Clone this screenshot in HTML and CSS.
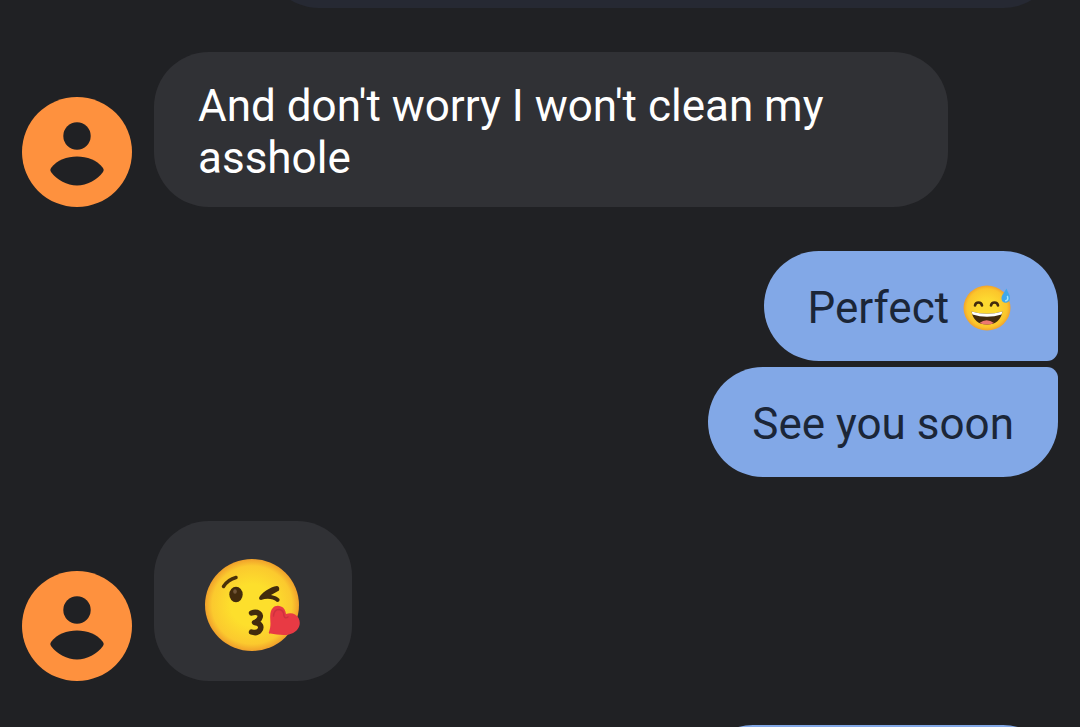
FILE: index.html
```
<!DOCTYPE html>
<html lang="en">
<head>
    <meta charset="UTF-8">
    <meta name="viewport" content="width=device-width, initial-scale=1.0">
    <title>Messages</title>
    <link rel="stylesheet" href="styles.css">
</head>
<body>
    <main class="chat">
        <div class="edge edge-top">
            <div class="bubble media"></div>
        </div>

        <div class="row received">
            <svg class="avatar" viewBox="0 0 110 110" role="img" aria-label="Contact">
                <circle cx="55" cy="55" r="55" fill="#fe913e"/>
                <circle cx="55" cy="39" r="13.7" fill="#202124"/>
                <path d="M29 71C35 63 45 59.5 55 59.5S75 63 81 71Q82.500 73 81 75C75 83 65 88.500 55 88.500S35 83 29 75Q27.500 73 29 71Z" fill="#202124"/>
            </svg>
            <p class="bubble">And don't worry I won't clean my asshole</p>
        </div>

        <div class="group sent">
            <p class="bubble first">Perfect
                <svg class="emoji" viewBox="0 0 48 46" role="img" aria-label="Grinning face with sweat">
                    <defs>
                        <radialGradient id="face">
                            <stop offset="0.4" stop-color="#fdd930"/>
                            <stop offset="0.85" stop-color="#fbc52b"/>
                            <stop offset="1" stop-color="#f2a32d"/>
                        </radialGradient>
                    </defs>
                    <ellipse cx="24" cy="23" rx="23.5" ry="22.5" fill="url(#face)"/>
                    <path d="M12 20.500Q12.500 17.500 15.500 17.500T19 20.500M28 20.500Q28.500 17.500 31.500 17.500T35 20.500" fill="none" stroke="#422b0d" stroke-width="2.6" stroke-linecap="round"/>
                    <path d="M8.500 26.500Q24 31 39.500 26.500Q37 39.500 24 39.500T8.500 26.500Z" fill="#422b0d"/>
                    <path d="M8.500 26.500Q24 31 39.500 26.500L38.500 29.500Q24 34 9.500 29.500Z" fill="#fff"/>
                    <path d="M16.500 38Q23.500 32.500 31 38Q24 41 16.500 38Z" fill="#ed7770"/>
                    <path d="M43.500 3.500C41 8 38.500 10 38.500 13.500C38.500 19.500 47 19 47 13C47 9.500 44.500 7 43.500 3.500Z" fill="#40a8ec"/>
                    <path d="M44.500 11.500Q45.500 15 42.800 15.800" fill="none" stroke="#a5e5fb" stroke-width="1.500" stroke-linecap="round"/>
                </svg>
            </p>
            <p class="bubble last">See you soon</p>
        </div>

        <div class="row received">
            <svg class="avatar" viewBox="0 0 110 110" role="img" aria-label="Contact">
                <circle cx="55" cy="55" r="55" fill="#fe913e"/>
                <circle cx="55" cy="39" r="13.7" fill="#202124"/>
                <path d="M29 71C35 63 45 59.5 55 59.5S75 63 81 71Q82.500 73 81 75C75 83 65 88.500 55 88.500S35 83 29 75Q27.500 73 29 71Z" fill="#202124"/>
            </svg>
            <div class="bubble sticker">
                <svg class="emoji-large" viewBox="0 0 96 92" role="img" aria-label="Face blowing a kiss">
                    <defs>
                        <radialGradient id="kiss">
                            <stop offset="0.45" stop-color="#fddf2c"/>
                            <stop offset="0.85" stop-color="#fbc92e"/>
                            <stop offset="1" stop-color="#f0a02b"/>
                        </radialGradient>
                    </defs>
                    <ellipse cx="47" cy="46" rx="47" ry="46" fill="url(#kiss)"/>
                    <path d="M18.500 27.500Q23 20.500 31 18.500" fill="none" stroke="#4a3009" stroke-width="3.500" stroke-linecap="round"/>
                    <ellipse cx="31" cy="35.500" rx="6.700" ry="7.800" fill="#422b0d"/>
                    <ellipse cx="30" cy="32.500" rx="1.800" ry="2.300" fill="#705538"/>
                    <path d="M72 27C65 28 56 34 54 39Q54 41 56 41C62 39 68 39.500 72 43Q75 43 74.500 40Q72 37 66 36Q71 33 74 31.500Q75 27.500 72 27Z" fill="#422b0d"/>
                    <path d="M46.500 54C52.500 52 57 55 54.500 59.500C53.500 62 51 63 49.500 63.500C56 64 57 68.500 54.500 71.500C52.500 74 49.500 74 46.500 73" fill="none" stroke="#422b0d" stroke-width="5.500" stroke-linecap="round" stroke-linejoin="round"/>
                    <path d="M65.500 74.500C64 75 63.500 74 64 73C66.500 66 65 61.500 65.200 57C65.500 48 71 45.500 76 47.500C79 48.500 80.500 51.500 81 55C86 53 91 54.500 93.500 59C97.500 67 91.500 74 84 75.500C77 77 71 75 65.500 74.500Z" fill="#e83a44"/>
                    <path d="M68.500 57Q69 50.500 74 50.500Q79 51 79 57Q80 60 83 58" fill="none" stroke="#cf323e" stroke-width="1.500" stroke-linecap="round"/>
                </svg>
            </div>
        </div>

        <div class="edge edge-bottom">
            <div class="bubble next"></div>
        </div>
    </main>
</body>
</html>
```
FILE: styles.css
```
* {
    margin: 0;
    padding: 0;
    box-sizing: border-box;
}

body {
    background: #202124;
    color: #ffffff;
    font-family: Roboto, 'Liberation Sans', sans-serif;
    font-size: 44px;
    line-height: 52px;
}

.chat {
    height: 100vh;
    overflow: hidden;
    display: flex;
    flex-direction: column;
    gap: 44px;
    padding: 0 22px;
}

.row {
    display: flex;
    flex-shrink: 0;
    align-items: flex-end;
    gap: 22px;
}

.avatar {
    width: 110px;
    height: 110px;
    flex-shrink: 0;
}

.bubble {
    max-width: 794px;
    min-height: 110px;
    padding: 28px 44px 23px;
    border-radius: 55px;
}

.received .bubble {
    background: #303135;
}

.received .sticker {
    padding: 38px 51px 30px;
}

.group {
    display: flex;
    flex-direction: column;
    flex-shrink: 0;
    align-items: flex-end;
    gap: 6px;
}

.sent .bubble {
    padding: 31px 44px 27px;
    background: #82a8e7;
    color: #1b2638;
}

.sent .first {
    border-bottom-right-radius: 11px;
}

.sent .last {
    border-top-right-radius: 11px;
}

.emoji {
    width: 48px;
    height: 46px;
    margin: 0 3px;
    vertical-align: -8px;
}

.emoji-large {
    display: block;
    width: 96px;
    height: 92px;
}

/* neighbouring messages that are scrolled mostly out of view */
.edge {
    display: flex;
    flex-shrink: 0;
    justify-content: flex-end;
}

.edge-top {
    height: 8px;
    align-items: flex-end;
}

.media {
    width: 794px;
    background: #262933;
}

.edge-bottom .next {
    width: 360px;
    background: #82a8e7;
}
```
